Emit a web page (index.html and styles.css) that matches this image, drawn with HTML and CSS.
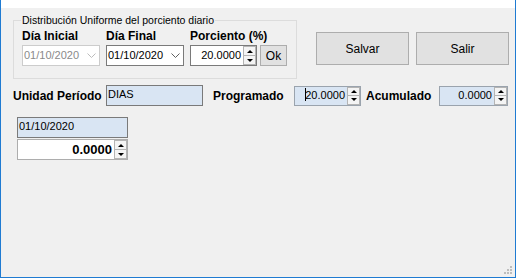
FILE: index.html
```html
<!DOCTYPE html>
<html>
<head>
<meta charset="utf-8">
<link rel="stylesheet" href="styles.css">
</head>
<body>
<div class="window">
  <div class="topstrip"></div>
  <div class="content">
    <div class="row-top">
      <fieldset class="group">
        <legend>Distribución Uniforme del porciento diario</legend>
        <div class="fields">
          <div class="field">
            <div class="lbl">Día Inicial</div>
            <div class="date disabled"><span class="dtext">01/10/2020</span><svg class="chev" width="9" height="5" viewBox="0 0 9 5"><polyline points="0.5,0.5 4.5,4.5 8.5,0.5"/></svg></div>
          </div>
          <div class="field">
            <div class="lbl">Día Final</div>
            <div class="date"><span class="dtext">01/10/2020</span><svg class="chev" width="9" height="5" viewBox="0 0 9 5"><polyline points="0.5,0.5 4.5,4.5 8.5,0.5"/></svg></div>
          </div>
          <div class="field">
            <div class="lbl">Porciento (%)</div>
            <div class="pct-row">
              <div class="num pct"><span class="val">20.0000</span><div class="spin"><div class="sb"><i class="up"></i></div><div class="sb"><i class="dn"></i></div></div></div>
              <button class="btn ok">Ok</button>
            </div>
          </div>
        </div>
      </fieldset>
      <div class="actions">
        <button class="btn big">Salvar</button>
        <button class="btn big">Salir</button>
      </div>
    </div>

    <div class="row-mid">
      <div class="blbl w-unidad">Unidad Período</div>
      <div class="tbox dias">DIAS</div>
      <div class="blbl w-prog">Programado</div>
      <div class="num blue prog"><span class="val"><span class="caret"></span>20.0000</span><div class="spin"><div class="sb"><i class="up"></i></div><div class="sb"><i class="dn"></i></div></div></div>
      <div class="blbl w-acum">Acumulado</div>
      <div class="num blue acum"><span class="val">0.0000</span><div class="spin"><div class="sb"><i class="up"></i></div><div class="sb"><i class="dn"></i></div></div></div>
    </div>

    <div class="col-day">
      <div class="tbox daydate">01/10/2020</div>
      <div class="num daynum"><span class="val bold">0.0000</span><div class="spin"><div class="sb"><i class="up"></i></div><div class="sb"><i class="dn"></i></div></div></div>
    </div>
  </div>
  <svg class="grip" width="9" height="9" viewBox="0 0 9 9">
    <rect x="6" y="0" width="2" height="2"/>
    <rect x="3" y="3" width="2" height="2"/>
    <rect x="6" y="3" width="2" height="2"/>
    <rect x="0" y="6" width="2" height="2"/>
    <rect x="3" y="6" width="2" height="2"/>
    <rect x="6" y="6" width="2" height="2"/>
  </svg>
</div>
</body>
</html>
```

FILE: styles.css
```css
html, body {
  margin: 0;
  padding: 0;
  background: #ffffff;
}

body {
  font-family: "Liberation Sans", Arial, sans-serif;
  font-size: 11px;
  color: #000;
}

.window {
  position: relative;
  width: 516px;
  height: 278px;
  box-sizing: border-box;
  border: 1px solid #1f7bd2;
  border-top: 0;
  background: #f0f0f0;
  display: flex;
  flex-direction: column;
}

.topstrip {
  height: 8px;
  background: #ffffff;
}

.content {
  padding-left: 12px;
  display: flex;
  flex-direction: column;
}

.row-top {
  display: flex;
  align-items: flex-start;
  margin-top: 5px;
}

.group {
  margin: 0;
  width: 284px;
  box-sizing: border-box;
  border: 1px solid #dcdcdc;
  padding: 1px 7px 12px 8px;
}

.group legend {
  padding: 0 1px;
  margin-left: -1px;
  font-size: 10.5px;
  line-height: 14px;
  color: #000;
}

.fields {
  display: flex;
  gap: 6px;
}

.field {
  display: flex;
  flex-direction: column;
}

.lbl {
  font-weight: bold;
  font-size: 12px;
  line-height: 16px;
  height: 16px;
  margin-bottom: 1px;
}

.date {
  width: 78px;
  height: 21px;
  box-sizing: border-box;
  border: 1px solid #7a7a7a;
  background: #fff;
  display: flex;
  align-items: center;
  justify-content: space-between;
  padding: 0 3px 0 1px;
}

.date .dtext {
  line-height: 19px;
}

.chev polyline {
  fill: none;
  stroke: #606060;
  stroke-width: 1;
}

.date.disabled {
  border-color: #cccccc;
  color: #8a8a8a;
}

.date.disabled .chev polyline {
  stroke: #bcbcbc;
}

.pct-row {
  display: flex;
  gap: 3px;
}

.num {
  height: 21px;
  box-sizing: border-box;
  border: 1px solid #7a7a7a;
  background: #fff;
  display: flex;
}

.num .val {
  flex: 1;
  text-align: right;
  line-height: 19px;
  padding-right: 2px;
  white-space: nowrap;
}

.num .val.bold {
  font-weight: bold;
  font-size: 13px;
}

.spin {
  width: 13px;
  display: flex;
  flex-direction: column;
  border: 1px solid #b4b4b4;
  box-sizing: border-box;
  background: #f4f4f4;
}

.sb {
  flex: 1;
  display: flex;
  align-items: center;
  justify-content: center;
}

.sb + .sb {
  border-top: 1px solid #b4b4b4;
}

.up {
  width: 0;
  height: 0;
  border-left: 3px solid transparent;
  border-right: 3px solid transparent;
  border-bottom: 3px solid #000;
}

.dn {
  width: 0;
  height: 0;
  border-left: 3px solid transparent;
  border-right: 3px solid transparent;
  border-top: 3px solid #000;
}

.pct {
  width: 67px;
}

.btn {
  font-family: "Liberation Sans", Arial, sans-serif;
  font-size: 11px;
  color: #000;
  background: #e1e1e1;
  border: 1px solid #adadad;
  padding: 0;
  margin: 0;
  box-sizing: border-box;
}

.ok {
  width: 27px;
  height: 21px;
  font-size: 12px;
}

.actions {
  display: flex;
  gap: 7px;
  margin-left: 19px;
  margin-top: 19px;
}

.big {
  width: 93px;
  height: 33px;
  font-size: 12px;
}

.row-mid {
  display: flex;
  align-items: center;
  margin-top: 6px;
  height: 21px;
}

.blbl {
  font-weight: bold;
  font-size: 12px;
  white-space: nowrap;
}

.w-unidad { width: 93px; }
.w-prog { width: 81px; margin-left: 10px; }
.w-acum { width: 73px; margin-left: 5px; }

.tbox {
  height: 21px;
  box-sizing: border-box;
  border: 1px solid #7a7a7a;
  background: #d9e5f3;
  padding-left: 1px;
  line-height: 17px;
}

.dias {
  width: 97px;
}

.blue {
  background: #d9e5f3;
  border-color: #9aa3ad;
  height: 20px;
}

.blue .val {
  line-height: 17px;
}

.prog {
  width: 67px;
}

.acum {
  width: 69px;
}

.caret {
  display: inline-block;
  width: 1px;
  height: 13px;
  background: #000;
  vertical-align: -2px;
  margin-right: -1px;
}

.col-day {
  display: flex;
  flex-direction: column;
  gap: 1px;
  margin-left: 4px;
  margin-top: 11px;
  width: 111px;
}

.daydate {
  width: 111px;
}

.daynum {
  width: 111px;
  border-color: #adadad;
}

.grip {
  position: absolute;
  right: 2px;
  bottom: 2px;
}

.grip rect {
  fill: #bdbdbd;
}
```
